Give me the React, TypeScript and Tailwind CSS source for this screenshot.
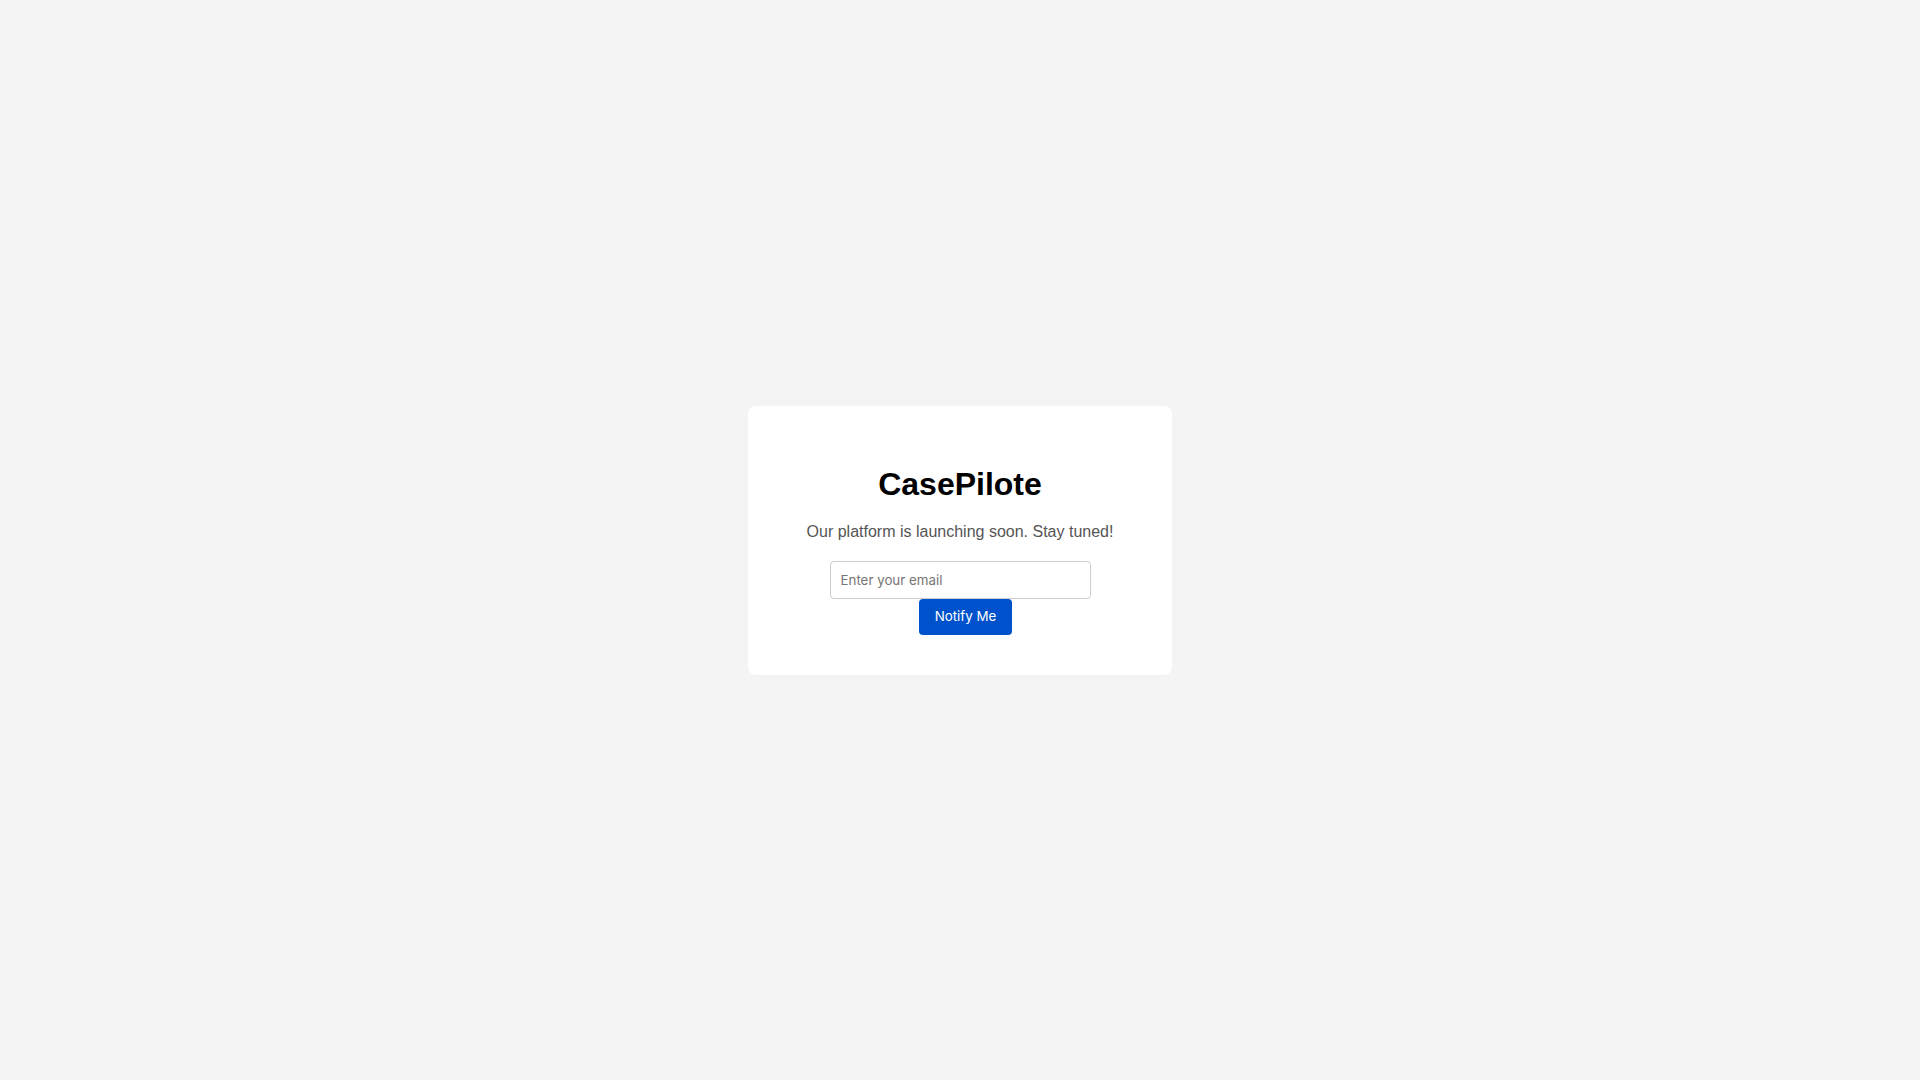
export default function App() {
    return (
        <div className="min-h-screen flex items-center justify-center bg-[#f4f4f4] font-['Liberation_Sans',Arial,sans-serif]">
            <div className="w-[424px] bg-white rounded-[8px] p-[40px] text-center">
                <h1 className="text-[32px] font-bold leading-[37px] text-black mt-[20px] mb-[20px]">CasePilote</h1>
                <p className="text-[16px] leading-[18px] text-[#555] mb-[20px]">
                    Our platform is launching soon. Stay tuned!
                </p>
                <form className="flex flex-col items-center" onSubmit={(e) => e.preventDefault()}>
                    <input
                        type="email"
                        placeholder="Enter your email"
                        className="w-[261px] h-[38px] px-[10px] border border-[#ccc] rounded-[4px] text-[13.33px] font-['Inter',sans-serif] text-[#333] placeholder:text-[#757575] outline-none"
                    />
                    <button
                        type="submit"
                        className="ml-[11px] h-[36px] px-[16px] bg-[#0052cc] text-white rounded-[4px] text-[13.33px] font-['Inter',sans-serif]"
                    >
                        Notify Me
                    </button>
                </form>
            </div>
        </div>
    );
}
